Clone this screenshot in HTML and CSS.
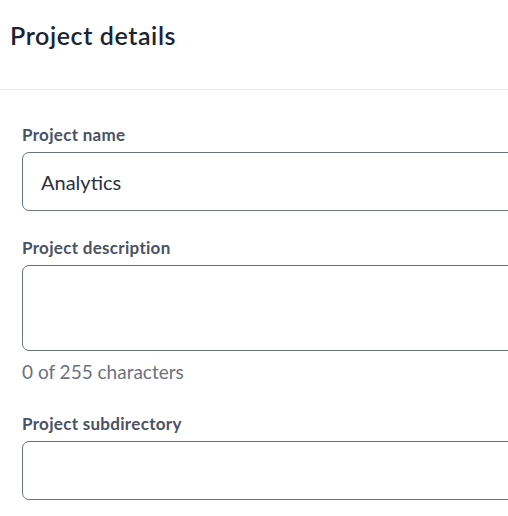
FILE: index.html
```html
<!DOCTYPE html>
<html lang="en">
<head>
<meta charset="UTF-8">
<meta name="viewport" content="width=device-width, initial-scale=1.0">
<title>Project details</title>
<link rel="stylesheet" href="styles.css">
</head>
<body>

<div class="panel">
    <div class="panel-header">
        <h1>Project details</h1>
    </div>

    <div class="panel-body">
        <div class="form-group">
            <label for="projectName">Project name</label>
            <input type="text" id="projectName" class="field" value="Analytics">
        </div>

        <div class="form-group">
            <label for="projectDescription">Project description</label>
            <textarea id="projectDescription" class="field field-area"></textarea>
            <div class="hint">0 of 255 characters</div>
        </div>

        <div class="form-group">
            <label for="projectSubdir">Project subdirectory</label>
            <input type="text" id="projectSubdir" class="field">
        </div>
    </div>
</div>

</body>
</html>
```

FILE: styles.css
```css
body {
    font-family: Lato, 'Open Sans', sans-serif;
    margin: 0;
    padding: 0;
    background-color: #fff;
    overflow: hidden;
}
.panel {
    width: 560px;
}
.panel-header {
    height: 90px;
    padding: 0 10px;
    border-bottom: 1px solid #e8e8e8;
    box-sizing: border-box;
}
.panel-header h1 {
    margin: 0;
    padding-top: 20px;
    font-size: 25px;
    font-weight: 600;
    letter-spacing: 0.6px;
    color: #1b2433;
}
.panel-body {
    padding: 34px 0 0 22px;
}
.form-group {
    margin-bottom: 26px;
}
.form-group label {
    display: block;
    font-size: 17px;
    font-weight: 700;
    letter-spacing: 0.3px;
    color: #4a5263;
    margin-bottom: 7px;
}
.field {
    display: block;
    width: 100%;
    height: 59px;
    box-sizing: border-box;
    padding: 0 18px;
    border: 1px solid #6b7280;
    border-radius: 7px;
    font-family: inherit;
    font-size: 20px;
    color: #2a3140;
    background-color: #fff;
    outline: none;
}
.field-area {
    height: 86px;
    resize: none;
}
.hint {
    margin-top: 9px;
    padding-bottom: 4px;
    font-size: 19px;
    color: #6b7280;
}
```
